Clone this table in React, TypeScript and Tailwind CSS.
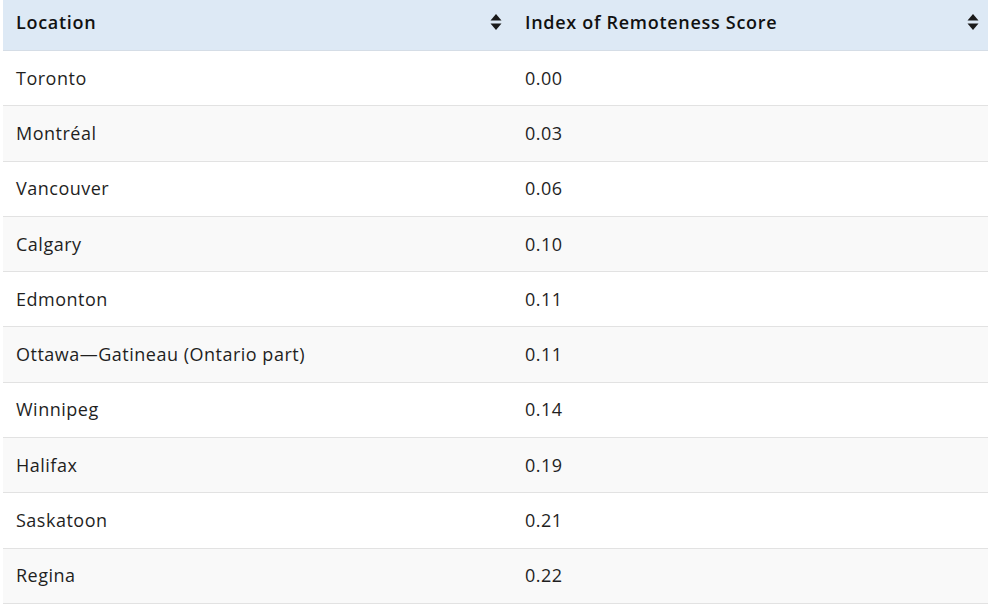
const rows: [string, string][] = [
  ["Toronto", "0.00"],
  ["Montréal", "0.03"],
  ["Vancouver", "0.06"],
  ["Calgary", "0.10"],
  ["Edmonton", "0.11"],
  ["Ottawa—Gatineau (Ontario part)", "0.11"],
  ["Winnipeg", "0.14"],
  ["Halifax", "0.19"],
  ["Saskatoon", "0.21"],
  ["Regina", "0.22"],
];

function SortIcon() {
  return (
    <svg width="12" height="18" viewBox="0 0 12 18" className="shrink-0">
      <path d="M6 1 L11.5 7.5 H0.5 Z" fill="#1a1a1a" />
      <path d="M6 17 L11.5 10.5 H0.5 Z" fill="#1a1a1a" />
    </svg>
  );
}

export default function App() {
  return (
    <div className="h-[610px] w-[992px] bg-white pl-[3px] pr-[4px] font-['Open_Sans',Arial,sans-serif] text-[18px] tracking-[0.5px] text-[#1f1f1f]">
      <div className="flex h-[51px] items-center border-b border-[#d5dde6] bg-[#dde9f5] font-semibold tracking-[0.7px] text-[#111]">
        <div className="flex h-full w-[507px] items-center justify-between pb-[6px] pl-[13px] pr-[8px]">
          <span>Location</span>
          <SortIcon />
        </div>
        <div className="flex h-full flex-1 items-center justify-between pb-[6px] pl-[15px] pr-[9px]">
          <span>Index of Remoteness Score</span>
          <SortIcon />
        </div>
      </div>
      {rows.map(([loc, score], i) => (
        <div
          key={loc}
          className={`flex h-[55.3px] items-center border-b border-[#e2e2e2] ${i % 2 === 1 ? "bg-[#f9f9f9]" : "bg-white"}`}
        >
          <div className="w-[507px] pl-[13px]">{loc}</div>
          <div className="flex-1 pl-[15px]">{score}</div>
        </div>
      ))}
    </div>
  );
}
